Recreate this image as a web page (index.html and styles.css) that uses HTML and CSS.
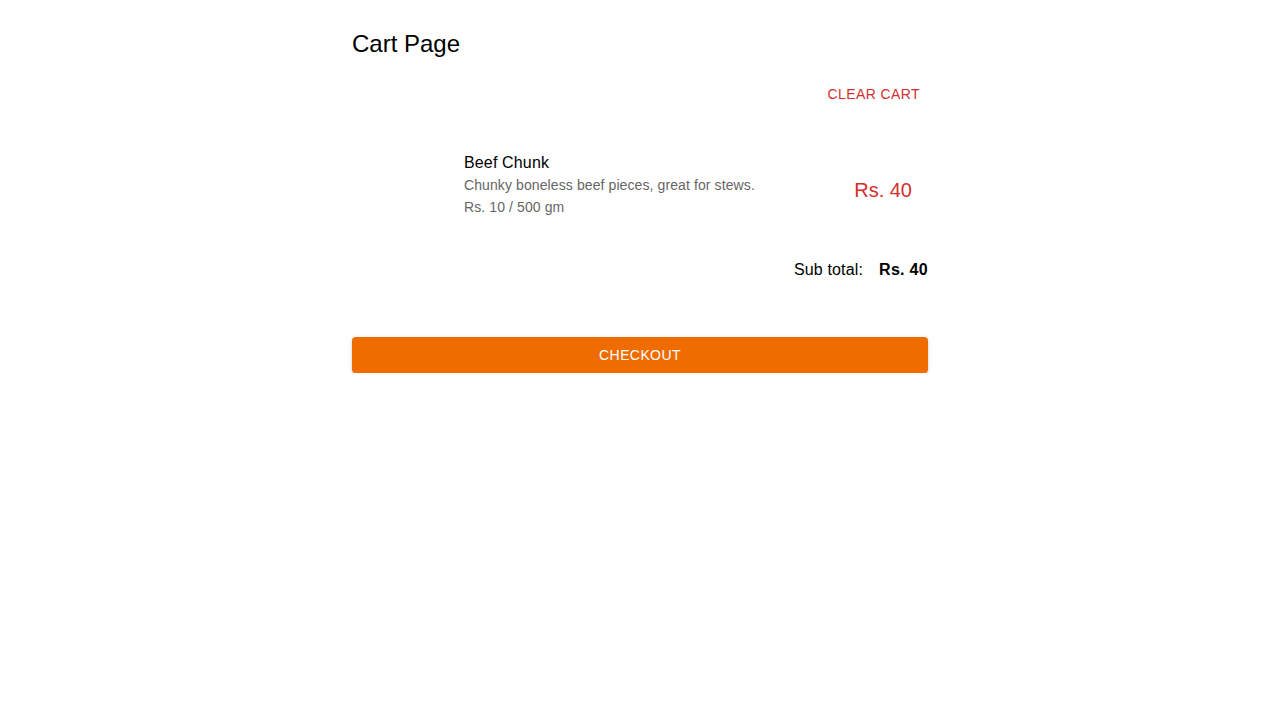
FILE: index.html
```html
<!DOCTYPE html>
<html>
<head>
<meta charset="utf-8">
<title>Cart Page</title>
<link rel="stylesheet" href="styles.css">
</head>
<body>
<div class="container">
  <h1 class="title">Cart Page</h1>
  <div class="actions">
    <button class="text-btn">Clear Cart</button>
  </div>
  <div class="item">
    <div class="thumb"></div>
    <div class="info">
      <div class="name">Beef Chunk</div>
      <div class="desc">Chunky boneless beef pieces, great for stews.</div>
      <div class="desc">Rs. 10 / 500 gm</div>
    </div>
    <div class="price">Rs. 40</div>
  </div>
  <div class="subtotal">
    <span class="sub-label">Sub total:</span>
    <span class="sub-value">Rs. 40</span>
  </div>
  <button class="checkout">Checkout</button>
</div>
</body>
</html>
```

FILE: styles.css
```css
* { box-sizing: border-box; }
body {
  margin: 0;
  background: #fff;
  font-family: "Liberation Sans", Arial, Helvetica, sans-serif;
  color: #000;
}
.container {
  width: 576px;
  margin: 0 auto;
  padding-top: 28px;
}
.title {
  margin: 0;
  font-size: 24px;
  line-height: 32px;
  font-weight: 400;
}
.actions {
  display: flex;
  justify-content: flex-end;
  margin-top: 16px;
}
.text-btn {
  border: 0;
  background: transparent;
  font-family: inherit;
  font-size: 14px;
  line-height: 24px;
  padding: 6px 8px;
  letter-spacing: 0.4px;
  text-transform: uppercase;
  color: #d32f2f;
  cursor: pointer;
}
.item {
  display: flex;
  align-items: center;
  height: 80px;
  margin-top: 32px;
}
.thumb {
  width: 112px;
  height: 80px;
  flex: none;
}
.info {
  flex: 1;
  align-self: flex-start;
  padding-top: 8px;
}
.name {
  font-size: 16px;
  line-height: 22px;
  letter-spacing: 0.15px;
}
.desc {
  font-size: 14px;
  line-height: 22px;
  letter-spacing: 0.1px;
  color: #666;
}
.price {
  font-size: 20px;
  color: #d32f2f;
  padding-right: 16px;
  padding-top: 12px;
}
.subtotal {
  display: flex;
  justify-content: flex-end;
  gap: 16px;
  margin-top: 34px;
  font-size: 16px;
  line-height: 24px;
}
.sub-label {
  letter-spacing: 0.15px;
}
.sub-value {
  font-weight: 700;
  letter-spacing: 0.3px;
}
.checkout {
  display: block;
  width: 100%;
  height: 36px;
  margin-top: 55px;
  border: 0;
  border-radius: 4px;
  background: #ef6c00;
  color: #fff;
  font-family: inherit;
  font-size: 14px;
  letter-spacing: 0.4px;
  text-transform: uppercase;
  box-shadow: 0 3px 1px -2px rgba(0,0,0,0.2), 0 2px 2px 0 rgba(0,0,0,0.14), 0 1px 5px 0 rgba(0,0,0,0.12);
  cursor: pointer;
}
```
